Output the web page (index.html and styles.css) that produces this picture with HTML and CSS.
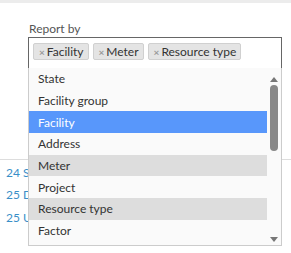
FILE: index.html
```html
<!DOCTYPE html>
<html>
<head>
<meta charset="utf-8">
<link rel="stylesheet" href="styles.css">
</head>
<body>
<div class="topbar"></div>
<div class="form">
  <div class="label">Report by</div>
  <div class="select">
    <div class="selection">
      <span class="tag"><span class="x">×</span>Facility</span>
      <span class="tag"><span class="x">×</span>Meter</span>
      <span class="tag"><span class="x">×</span>Resource type</span>
    </div>
    <div class="dropdown">
      <ul class="options">
        <li class="opt">State</li>
        <li class="opt">Facility group</li>
        <li class="opt hl">Facility</li>
        <li class="opt">Address</li>
        <li class="opt sel">Meter</li>
        <li class="opt">Project</li>
        <li class="opt sel">Resource type</li>
        <li class="opt">Factor</li>
      </ul>
      <div class="scrollbar">
        <div class="arrow up"></div>
        <div class="thumb"></div>
        <div class="track"></div>
        <div class="arrow down"></div>
      </div>
    </div>
  </div>
</div>
<div class="table">
  <div class="row">24 Sl</div>
  <div class="row">25 D</div>
  <div class="row">25 U</div>
</div>
</body>
</html>
```
FILE: styles.css
```css
html, body {
  margin: 0;
  padding: 0;
  background: #ffffff;
  font-family: Lato, "Open Sans", sans-serif;
  font-size: 12px;
  color: #333333;
}
body {
  min-height: 100vh;
}
.topbar {
  height: 3px;
  background: #ececec;
}
.form {
  padding: 0 9px 0 28px;
}
.label {
  margin-top: 18px;
  line-height: 15px;
  color: #555555;
  padding-left: 1px;
}
.select {
  position: relative;
  margin-top: 1px;
}
.selection {
  height: 31px;
  box-sizing: border-box;
  border: 1px solid #666666;
  border-bottom: none;
  padding: 5px 0 0 4px;
  display: flex;
  gap: 4px;
  align-items: flex-start;
}
.tag {
  display: flex;
  align-items: center;
  height: 17px;
  box-sizing: border-box;
  background: #e4e4e4;
  border: 1px solid #d0d0d0;
  border-radius: 2px;
  padding: 0 4px 0 5px;
  color: #333333;
}
.tag .x {
  color: #999999;
  margin-right: 2px;
  font-weight: bold;
  font-size: 10px;
}
.dropdown {
  position: absolute;
  left: 0;
  top: 31px;
  width: 254px;
  height: 178px;
  box-sizing: border-box;
  border: 1px solid #cccccc;
  border-top: none;
  background: #fafafa;
  display: flex;
  overflow: hidden;
  z-index: 2;
}
.options {
  list-style: none;
  margin: 0;
  padding: 0;
  width: 238px;
  flex: none;
}
.opt {
  height: 21.67px;
  display: flex;
  align-items: center;
  padding-left: 9px;
}
.opt.hl {
  background: #5897fb;
  color: #ffffff;
}
.opt.sel {
  background: #dddddd;
}
.scrollbar {
  flex: 1;
  display: flex;
  flex-direction: column;
  align-items: center;
  padding-top: 9px;
}
.arrow {
  width: 0;
  height: 0;
  border-left: 4px solid transparent;
  border-right: 4px solid transparent;
}
.arrow.up {
  border-bottom: 5px solid #777777;
}
.arrow.down {
  border-top: 5px solid #777777;
}
.thumb {
  width: 8px;
  height: 66px;
  margin-top: 3px;
  border-radius: 4px;
  background: #888888;
}
.track {
  height: 86px;
}
.table {
  margin-top: 91px;
  border-top: 1px solid #dddddd;
  padding-left: 6px;
  padding-top: 2px;
}
.row {
  height: 22.3px;
  line-height: 22.3px;
  color: #3a8fc8;
}
```
